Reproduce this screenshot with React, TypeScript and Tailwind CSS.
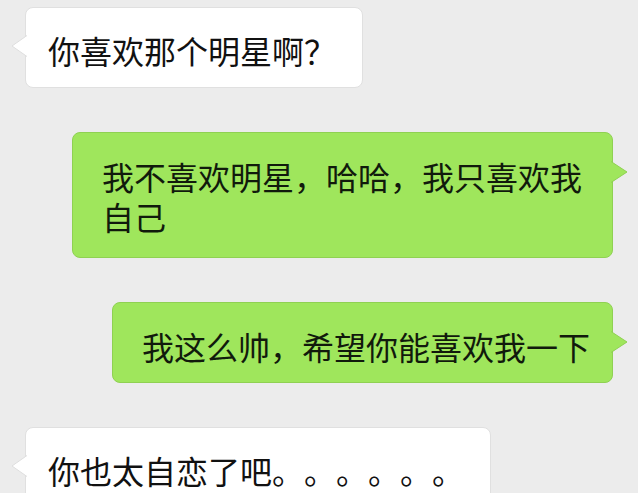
const messages = [
  { id: 1, from: "them", text: "你喜欢那个明星啊？", dots: 0, extra: "" },
  { id: 2, from: "me", text: "我不喜欢明星，哈哈，我只喜欢我自己", dots: 0, extra: "w-[541px] pb-[21px]" },
  { id: 3, from: "me", text: "我这么帅，希望你能喜欢我一下", dots: 0, extra: "pb-[16px]" },
  { id: 4, from: "them", text: "你也太自恋了吧", dots: 6, extra: "" },
]

function Tail({ side }: { side: "left" | "right" }) {
  // small speech-bubble pointer
  if (side === "left") {
    return (
      <svg className="absolute left-[-15px] top-[27px]" width="16" height="22" viewBox="0 0 16 22">
        <path d="M16 0.5 L1 11 L16 21.5" fill="#ffffff" stroke="#dedede" strokeWidth="1" />
      </svg>
    )
  }
  return (
    <svg className="absolute right-[-16px] top-[28px]" width="17" height="22" viewBox="0 0 17 22">
      <path d="M0 0.5 L16 11 L0 21.5" fill="#9fe65c" stroke="#8fd152" strokeWidth="1" />
    </svg>
  )
}

export default function App() {
  return (
    <div
      className="flex h-[493px] w-[638px] flex-col gap-[44px] overflow-hidden bg-[#ececec] px-[25px] pt-[7px]"
      style={{ fontFamily: '"Noto Sans CJK SC", "Noto Sans", sans-serif' }}
    >
      {messages.map((m) =>
        m.from === "them" ? (
          <div key={m.id} className="flex justify-start">
            <div className="relative rounded-[8px] border border-[#e0e0e0] bg-white pt-[22px] pr-[26px] pb-[17px] pl-[22px] text-[32px] leading-[40px] text-[#111111]">
              <Tail side="left" />
              {m.text}
              {Array.from({ length: m.dots }).map((_, i) => (
                <span key={i} className="inline-block w-[32px] text-left">
                  。
                </span>
              ))}
            </div>
          </div>
        ) : (
          <div key={m.id} className="flex justify-end">
            <div
              className={`relative rounded-[8px] border border-[#8fd152] bg-[#9fe65c] pt-[23px] pr-[22px] pl-[29px] text-[32px] leading-[40px] text-[#111a0c] ${m.extra}`}
            >
              <Tail side="right" />
              {m.text}
            </div>
          </div>
        )
      )}
    </div>
  )
}
